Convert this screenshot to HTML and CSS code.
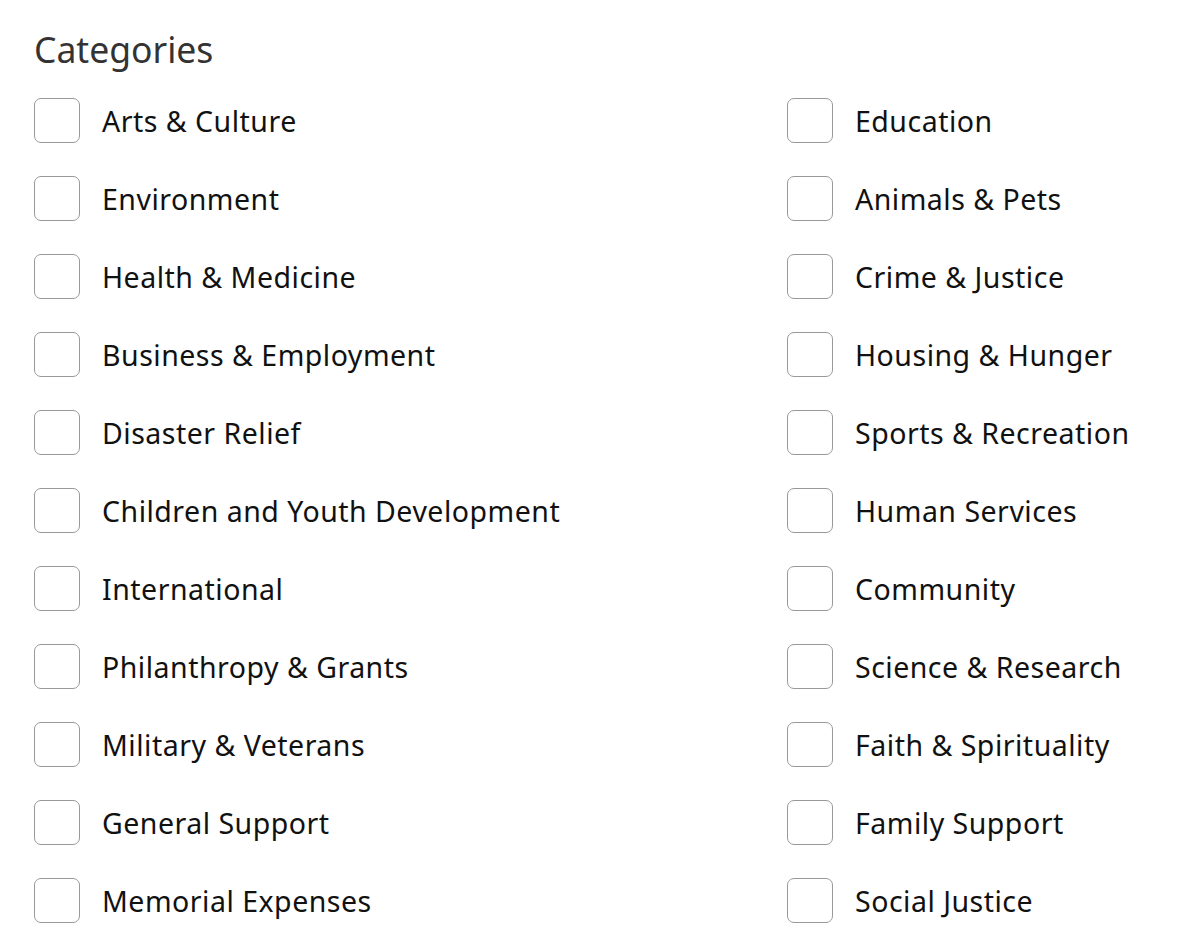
FILE: index.html
```html
<!DOCTYPE html>
<html lang="en">

<head>
    <meta charset="UTF-8">
    <meta name="viewport" content="width=device-width, initial-scale=1.0">
    <title>Categories</title>
    <link rel="stylesheet" href="styles.css">
</head>

<body>
    <div class="categories">
        <h2 class="title">Categories</h2>
        <div class="list">
            <label class="item"><input type="checkbox"><span class="box"></span>Arts &amp; Culture</label>
            <label class="item"><input type="checkbox"><span class="box"></span>Education</label>
            <label class="item"><input type="checkbox"><span class="box"></span>Environment</label>
            <label class="item"><input type="checkbox"><span class="box"></span>Animals &amp; Pets</label>
            <label class="item"><input type="checkbox"><span class="box"></span>Health &amp; Medicine</label>
            <label class="item"><input type="checkbox"><span class="box"></span>Crime &amp; Justice</label>
            <label class="item"><input type="checkbox"><span class="box"></span>Business &amp; Employment</label>
            <label class="item"><input type="checkbox"><span class="box"></span>Housing &amp; Hunger</label>
            <label class="item"><input type="checkbox"><span class="box"></span>Disaster Relief</label>
            <label class="item"><input type="checkbox"><span class="box"></span>Sports &amp; Recreation</label>
            <label class="item"><input type="checkbox"><span class="box"></span>Children and Youth Development</label>
            <label class="item"><input type="checkbox"><span class="box"></span>Human Services</label>
            <label class="item"><input type="checkbox"><span class="box"></span>International</label>
            <label class="item"><input type="checkbox"><span class="box"></span>Community</label>
            <label class="item"><input type="checkbox"><span class="box"></span>Philanthropy &amp; Grants</label>
            <label class="item"><input type="checkbox"><span class="box"></span>Science &amp; Research</label>
            <label class="item"><input type="checkbox"><span class="box"></span>Military &amp; Veterans</label>
            <label class="item"><input type="checkbox"><span class="box"></span>Faith &amp; Spirituality</label>
            <label class="item"><input type="checkbox"><span class="box"></span>General Support</label>
            <label class="item"><input type="checkbox"><span class="box"></span>Family Support</label>
            <label class="item"><input type="checkbox"><span class="box"></span>Memorial Expenses</label>
            <label class="item"><input type="checkbox"><span class="box"></span>Social Justice</label>
        </div>
    </div>
</body>

</html>
```

FILE: styles.css
```css
* {
    margin: 0;
    padding: 0;
    box-sizing: border-box;
}

body {
    background-color: #fff;
    font-family: "Noto Sans", "Open Sans", sans-serif;
}

.categories {
    padding: 24px 0 0 34px;
}

.title {
    font-size: 35.5px;
    font-weight: 400;
    color: #333;
    line-height: 50px;
    margin-bottom: 24px;
}

.list {
    display: grid;
    grid-template-columns: 753px 1fr;
    row-gap: 33px;
}

.item {
    display: flex;
    align-items: center;
    gap: 22px;
    height: 45px;
    font-size: 28.5px;
    letter-spacing: 0.5px;
    color: #111;
    cursor: pointer;
}

.item input {
    display: none;
}

.box {
    width: 46px;
    height: 45px;
    border: 1.5px solid #999;
    border-radius: 7px;
    flex-shrink: 0;
}

.item input:checked + .box {
    background-color: #0070ba;
    border-color: #0070ba;
}
```
